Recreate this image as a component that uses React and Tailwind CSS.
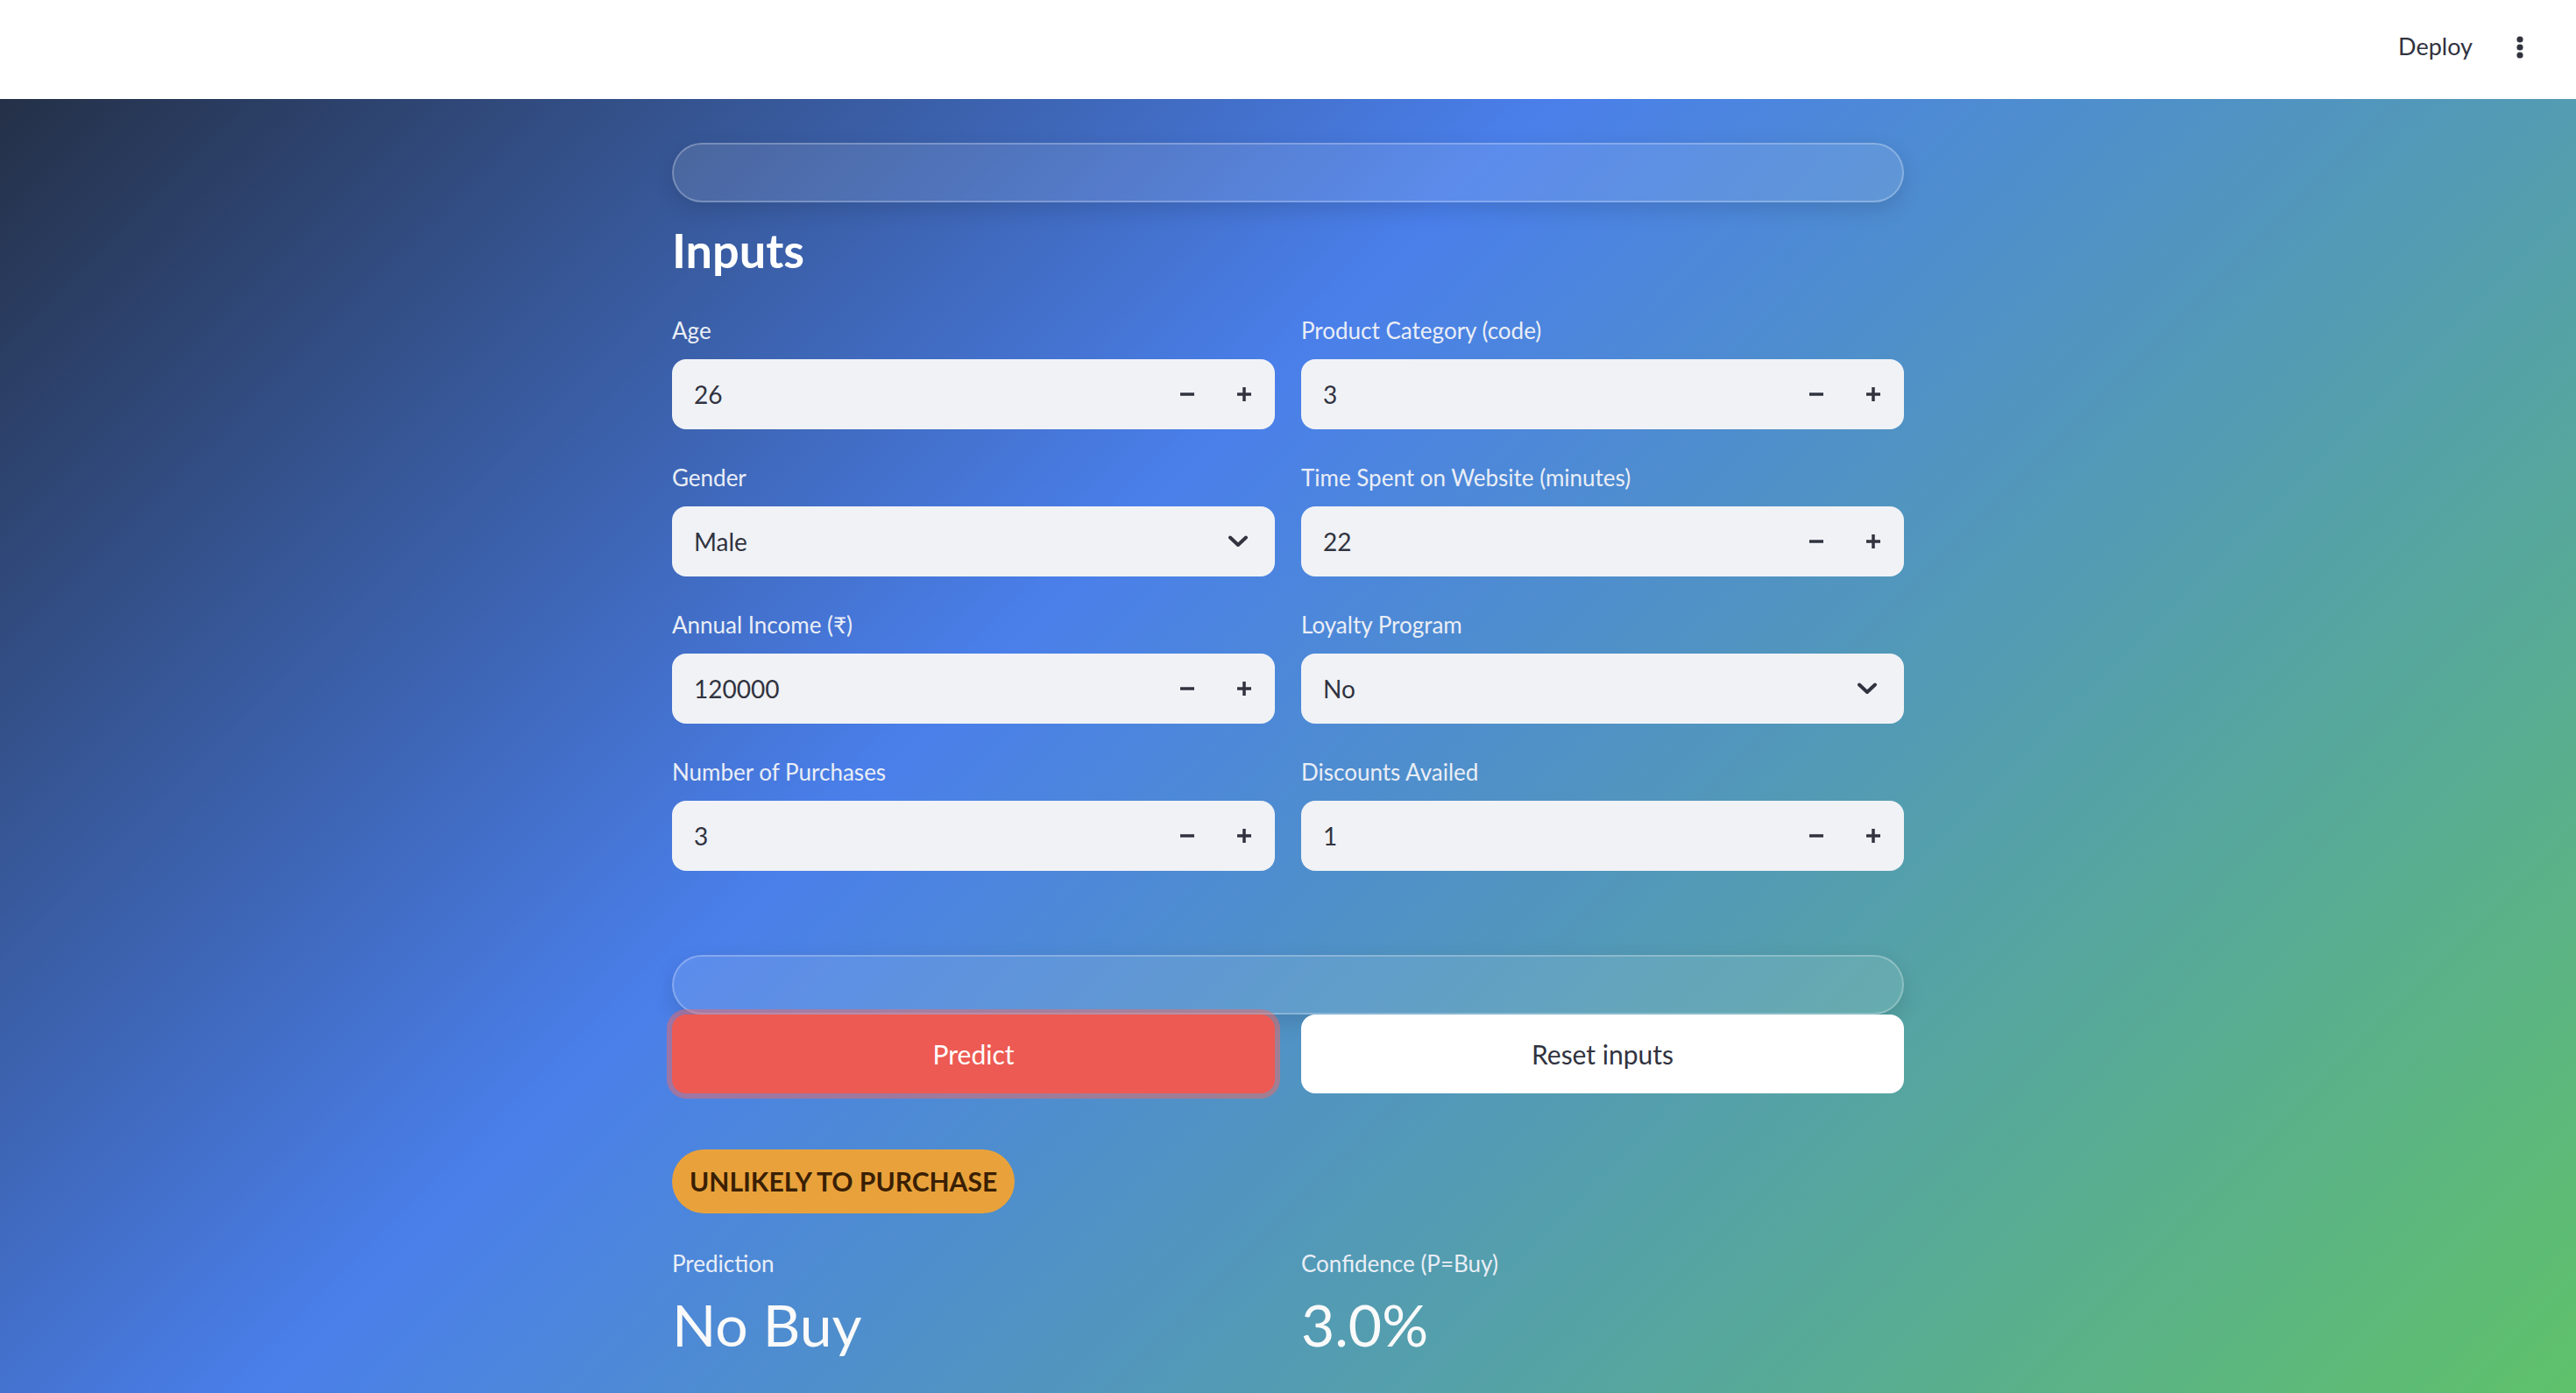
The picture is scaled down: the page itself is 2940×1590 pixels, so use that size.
import React from 'react'

const fields = [
  { label: 'Age', value: '26', kind: 'number' },
  { label: 'Product Category (code)', value: '3', kind: 'number' },
  { label: 'Gender', value: 'Male', kind: 'select' },
  { label: 'Time Spent on Website (minutes)', value: '22', kind: 'number' },
  { label: 'Annual Income (₹)', value: '120000', kind: 'number' },
  { label: 'Loyalty Program', value: 'No', kind: 'select' },
  { label: 'Number of Purchases', value: '3', kind: 'number' },
  { label: 'Discounts Availed', value: '1', kind: 'number' },
]

function MinusIcon() {
  return (
    <svg width="20" height="20" viewBox="0 0 20 20">
      <path d="M2 10h16" stroke="#31333f" strokeWidth="3.5" />
    </svg>
  )
}

function PlusIcon() {
  return (
    <svg width="20" height="20" viewBox="0 0 20 20">
      <path d="M2 10h16M10 2v16" stroke="#31333f" strokeWidth="3.5" />
    </svg>
  )
}

function Chevron() {
  return (
    <svg width="24" height="14" viewBox="0 0 24 14">
      <path d="M3 2.5l9 8.5 9-8.5" fill="none" stroke="#31333f" strokeWidth="4" strokeLinecap="round" strokeLinejoin="round" />
    </svg>
  )
}

function Field({ label, value, kind }) {
  return (
    <div className="flex flex-col">
      <div className="h-[40px] leading-[40px] text-[26px] text-[#eaeef6] mb-[13px]">{label}</div>
      <div className="h-[80px] rounded-[16px] bg-[#f0f2f6] flex items-center pl-[25px] text-[28px] text-[#31333f]">
        <span className="flex-1">{value}</span>
        {kind === 'number' ? (
          <div className="flex items-center pr-[2px]">
            <button className="w-[64px] h-[80px] flex items-center justify-center"><MinusIcon /></button>
            <button className="w-[66px] h-[80px] flex items-center justify-center"><PlusIcon /></button>
          </div>
        ) : (
          <div className="w-[84px] h-[80px] flex items-center justify-center"><Chevron /></div>
        )}
      </div>
    </div>
  )
}

function Metric({ label, value }) {
  return (
    <div className="flex flex-col">
      <div className="h-[40px] leading-[40px] text-[26px] text-[#eaeef6]">{label}</div>
      <div className="h-[80px] leading-[80px] text-[66px] text-[#fafafa] mt-[10px]">{value}</div>
    </div>
  )
}

export default function App() {
  return (
    <div className="min-h-screen font-['Lato','Noto_Sans',sans-serif]">
      <header className="h-[113px] bg-white flex items-center justify-end pr-[56px] pb-[6px] gap-[46px]">
        <span className="text-[27px] text-[#31333f]">Deploy</span>
        <svg width="16" height="28" viewBox="0 0 16 28">
          <circle cx="8" cy="5" r="3.6" fill="#31333f" />
          <circle cx="8" cy="14" r="3.6" fill="#31333f" />
          <circle cx="8" cy="23" r="3.6" fill="#31333f" />
        </svg>
      </header>

      <main className="min-h-[1477px] bg-[linear-gradient(135deg,#243047_0%,#4a7fea_40%,#5fc16a_100%)] pt-[50px] pb-[40px]">
        <div className="w-[1406px] mx-auto">
          <div className="h-[68px] rounded-full bg-white/10 border-2 border-white/25 shadow-[0_8px_24px_rgba(0,0,0,0.12)]" />

          <h1 className="h-[64px] leading-[64px] text-[54px] font-bold text-white mt-[23px]">Inputs</h1>

          <div className="grid grid-cols-2 gap-x-[30px] gap-y-[35px] mt-[39px]">
            {fields.map((f) => (
              <Field key={f.label} {...f} />
            ))}
          </div>

          <div className="h-[68px] rounded-full bg-white/10 border-2 border-white/25 shadow-[0_8px_24px_rgba(0,0,0,0.12)] mt-[96px]" />

          <div className="grid grid-cols-2 gap-x-[30px]">
            <button className="h-[90px] rounded-[16px] bg-[#ed5a53] text-white text-[30px] shadow-[0_0_0_6px_rgba(240,105,100,0.5)]">
              Predict
            </button>
            <button className="h-[90px] rounded-[16px] bg-white text-[#31333f] text-[30px]">
              Reset inputs
            </button>
          </div>

          <div className="mt-[64px] flex">
            <span className="h-[73px] px-[20px] rounded-full bg-[#e9a23b] text-[#3a1f04] text-[30px] font-bold flex items-center">
              UNLIKELY TO PURCHASE
            </span>
          </div>

          <div className="grid grid-cols-2 gap-x-[30px] mt-[37px]">
            <Metric label="Prediction" value="No Buy" />
            <Metric label="Confidence (P=Buy)" value="3.0%" />
          </div>
        </div>
      </main>
    </div>
  )
}
